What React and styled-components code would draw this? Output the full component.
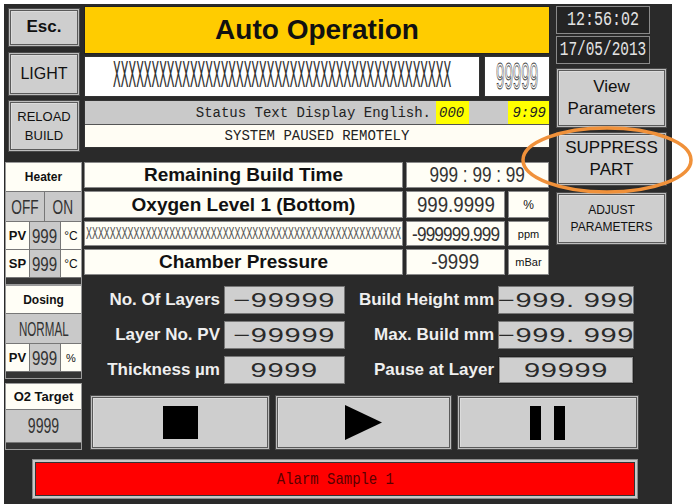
import React from 'react';
import styled, { createGlobalStyle } from 'styled-components';

const Global = createGlobalStyle`
  html, body { margin: 0; padding: 0; background: #fff; }
  body { font-family: "Liberation Sans", Arial, sans-serif; }
  * { box-sizing: border-box; }
`;

const Panel = styled.div`
  position: relative;
  margin: 4px 0 0 4px;
  width: 668px;
  height: 500px;
  background: #2a2a2a;
  padding: 2px 0 0 1px;
  display: flex;
  flex-direction: column;
`;

const Row = styled.div`
  display: flex;
  align-items: flex-start;
`;

const Col = styled.div`
  display: flex;
  flex-direction: column;
  width: ${p => p.$w}px;
  margin-left: ${p => p.$ml || 0}px;
`;

const Btn = styled.div`
  display: flex;
  align-items: center;
  justify-content: center;
  text-align: center;
  height: ${p => p.$h}px;
  margin: ${p => p.$m || '0'};
  background: #cecece;
  border: 1px solid #4a4a4a;
  box-shadow: inset 0 0 0 1px #bdbdbd, inset 0 0 0 2px #5a5a5a, inset 3px 3px 0 #dcdcdc;
  color: #111;
  font-family: "Liberation Sans", Arial, sans-serif;
  font-size: ${p => p.$fs || 16}px;
  font-weight: ${p => (p.$bold ? 700 : 400)};
  line-height: ${p => p.$lh || 1.2};
`;

const Title = styled.div`
  height: 48px;
  background: #ffcc00;
  border: 1px solid #222;
  display: flex;
  align-items: center;
  justify-content: center;
  font-weight: 700;
  font-size: 28px;
  color: #111;
`;

const XRow = styled.div`
  display: flex;
  gap: 4px;
  height: 41px;
  margin-top: 2px;
`;

const WhiteBox = styled.div`
  flex: ${p => (p.$w ? `0 0 ${p.$w}px` : 1)};
  background: #fff;
  border: 1px solid #333;
  display: flex;
  align-items: center;
  justify-content: center;
  overflow: hidden;
`;

const Squeeze = styled.span`
  display: inline-block;
  white-space: nowrap;
  flex: none;
  font-family: ${p => p.$font || '"Liberation Mono", monospace'};
  font-size: ${p => p.$fs}px;
  line-height: 1;
  color: ${p => p.$c || '#333'};
  transform: scale(${p => p.$sx}, ${p => p.$sy || 1});
  transform-origin: ${p => p.$origin || 'center'};
  letter-spacing: ${p => p.$ls || 0}px;
`;

const Outline = styled(Squeeze)`
  color: #fff;
  -webkit-text-stroke: 1px #444;
`;

const StatusBar = styled.div`
  margin-top: 3px;
  border: 1px solid #333;
  display: flex;
  flex-direction: column;
`;

const StatusLine = styled.div`
  height: 23px;
  background: #c9c9c9;
  display: flex;
  align-items: stretch;
  font-family: "Liberation Mono", monospace;
  font-size: 14px;
  color: #222;
`;

const StatusText = styled.div`
  flex: 1;
  display: flex;
  align-items: center;
  justify-content: flex-end;
  padding-right: 5px;
`;

const YellowBox = styled.div`
  width: ${p => p.$w}px;
  margin-right: ${p => p.$mr || 0}px;
  background: #ffff00;
  display: flex;
  align-items: center;
  justify-content: ${p => p.$align || 'flex-start'};
  padding: 0 3px;
  font-style: italic;
`;

const PausedLine = styled.div`
  height: 23px;
  background: #fffdf4;
  border-top: 1px solid #555;
  display: flex;
  align-items: center;
  justify-content: center;
  font-family: "Liberation Mono", monospace;
  font-size: 14px;
  color: #222;
`;

const Table = styled.div`
  margin-top: 14px;
  display: grid;
  grid-template-columns: 319px 99px 41px;
  grid-template-rows: 26px 27px 25px 26px;
  gap: 3px;
`;

const Cell = styled.div`
  background: #fffef6;
  border: 1px solid #8a8a8a;
  display: flex;
  align-items: center;
  justify-content: ${p => (p.$left ? 'flex-start' : 'center')};
  padding-left: ${p => (p.$left ? 1 : 0)}px;
  overflow: hidden;
  grid-column: ${p => p.$span || 'auto'};
  font-weight: ${p => (p.$bold ? 700 : 400)};
  font-size: ${p => p.$fs || 19}px;
  color: #111;
`;

const Clock = styled.div`
  width: 94px;
  height: 28px;
  margin-top: ${p => p.$mt || 0}px;
  border: 1px solid #8a8a8a;
  background: #242424;
  display: flex;
  align-items: center;
  justify-content: center;
  color: #e4e4e4;
`;

const Block = styled.div`
  margin-top: ${p => p.$mt || 0}px;
  border: 1px solid #9a9a9a;
  background: #353535;
  padding-bottom: 6px;
  display: grid;
  grid-template-columns: 24px 15px 16px 20px;
  grid-template-rows: ${p => p.$rows};
`;

const BCell = styled.div`
  grid-column: ${p => p.$span || 'auto'};
  background: ${p => (p.$gray ? '#c9c9c9' : '#fffef6')};
  border-right: ${p => (p.$last ? 'none' : '1px solid #777')};
  border-bottom: 1px solid #777;
  display: flex;
  align-items: center;
  justify-content: center;
  overflow: hidden;
  font-size: ${p => p.$fs || 12}px;
  font-weight: ${p => (p.$bold ? 700 : 400)};
  color: #111;
`;

const Fields = styled.div`
  margin-top: 1px;
  margin-left: 2px;
  display: grid;
  grid-template-columns: 134px 121px 145px 136px;
  grid-auto-rows: 28px;
  column-gap: 4px;
  row-gap: 7px;
`;

const Label = styled.div`
  display: flex;
  align-items: center;
  justify-content: flex-end;
  color: #efefef;
  font-weight: 700;
  font-size: 17px;
  white-space: nowrap;
`;

const ValBox = styled.div`
  background: #cfcfcf;
  border: 1px solid ${p => (p.$dark ? '#222' : '#777')};
  box-shadow: ${p => (p.$dark ? 'inset 0 0 0 1px #888' : 'none')};
  display: flex;
  align-items: center;
  justify-content: center;
  overflow: hidden;
`;

const Controls = styled.div`
  margin-top: 11px;
  margin-left: 6px;
  display: grid;
  grid-template-columns: 180px 177px 182px;
  column-gap: 5px;
`;

const AlarmFrame = styled.div`
  margin: 9px 0 0 27px;
  width: 606px;
  height: 40px;
  border: 1px solid #8a8a8a;
  background: #c8c8c8;
  padding: 2px;
`;

const AlarmInner = styled.div`
  height: 100%;
  background: #ff0000;
  border: 1px solid #333;
  display: flex;
  align-items: center;
  justify-content: center;
`;

const Ring = styled.svg`
  position: absolute;
  left: 517px;
  top: 121px;
  overflow: visible;
`;

const Narrow = ({ children, fs = 22, sx = 0.8, ls = 0, c = '#333' }) => (
  <Squeeze $font='"Liberation Sans", Arial, sans-serif' $fs={fs} $sx={sx} $ls={ls} $c={c}>{children}</Squeeze>
);

const Wide = ({ children }) => (
  <Squeeze $font='"Liberation Sans", Arial, sans-serif' $fs={20} $sx={1.45} $c="#2a2a2a" $ls={0.5}>{children}</Squeeze>
);

export default function App() {
  return (
    <>
      <Global />
      <Panel>
        <Row>
          <Col $w={77}>
            <Btn $h={39} $m="2px 2px 0 3px" $bold $fs={17}>Esc.</Btn>
            <Btn $h={44} $m="5px 2px 0 3px" $fs={16}>LIGHT</Btn>
            <Btn $h={52} $m="4px 2px 0 3px" $fs={13} $lh={1.5}>RELOAD<br />BUILD</Btn>
            <Block $mt={10} $rows="29px 30px 28px 28px">
              <BCell $span="1 / 5" $bold $last>Heater</BCell>
              <BCell $span="1 / 3" $gray><Narrow fs={21} sx={0.65}>OFF</Narrow></BCell>
              <BCell $span="3 / 5" $gray $last><Narrow fs={21} sx={0.65}>ON</Narrow></BCell>
              <BCell $bold $fs={13}>PV</BCell>
              <BCell $span="2 / 4" $gray><Narrow fs={21} sx={0.72}>999</Narrow></BCell>
              <BCell $last>°C</BCell>
              <BCell $bold $fs={13}>SP</BCell>
              <BCell $span="2 / 4" $gray><Narrow fs={21} sx={0.72}>999</Narrow></BCell>
              <BCell $last>°C</BCell>
            </Block>
          </Col>
          <Col $w={466} $ml={2}>
            <Title>Auto Operation</Title>
            <XRow>
              <WhiteBox>
                <Squeeze $fs={40} $sx={0.32} $sy={0.95} $c="#333">{'X'.repeat(44)}</Squeeze>
              </WhiteBox>
              <WhiteBox $w={66}>
                <Outline $font='"Liberation Sans", Arial, sans-serif' $fs={36} $sx={0.42}>99999</Outline>
              </WhiteBox>
            </XRow>
            <StatusBar>
              <StatusLine>
                <StatusText>Status Text Display English.</StatusText>
                <YellowBox $w={33} $mr={39}>000</YellowBox>
                <YellowBox $w={41} $align="flex-end">9:99</YellowBox>
              </StatusLine>
              <PausedLine>SYSTEM PAUSED REMOTELY</PausedLine>
            </StatusBar>
            <Table>
              <Cell $bold>Remaining Build Time</Cell>
              <Cell $span="2 / 4"><Narrow sx={0.78}>999 : 99 : 99</Narrow></Cell>
              <Cell $bold>Oxygen Level 1 (Bottom)</Cell>
              <Cell><Narrow sx={0.85}>999.9999</Narrow></Cell>
              <Cell $fs={12}>%</Cell>
              <Cell $left>
                <Squeeze $fs={18} $sx={0.55} $c="#555" $origin="left center">{'X'.repeat(53)}</Squeeze>
              </Cell>
              <Cell><Narrow fs={20} sx={0.86} ls={-1}>-999999.999</Narrow></Cell>
              <Cell $fs={11}>ppm</Cell>
              <Cell $bold>Chamber Pressure</Cell>
              <Cell><Narrow sx={0.85}>-9999</Narrow></Cell>
              <Cell $fs={11}>mBar</Cell>
            </Table>
          </Col>
          <Col $w={111} $ml={6}>
            <Clock><Squeeze $fs={20} $sx={0.75} $c="#e4e4e4">12:56:02</Squeeze></Clock>
            <Clock $mt={2}><Squeeze $fs={20} $sx={0.72} $c="#e4e4e4">17/05/2013</Squeeze></Clock>
            <Btn $h={60} $m="4px 0 0 0" $fs={17} $lh={1.3}>View<br />Parameters</Btn>
            <Btn $h={54} $m="4px 0 0 0" $fs={17} $lh={1.3}>SUPPRESS<br />PART</Btn>
            <Btn $h={53} $m="6px 0 0 0" $fs={12} $lh={1.35}>ADJUST<br />PARAMETERS</Btn>
          </Col>
        </Row>
        <Row>
          <Col $w={77}>
            <Block $rows="28px 30px 28px">
              <BCell $span="1 / 5" $bold $last>Dosing</BCell>
              <BCell $span="1 / 5" $gray $last><Narrow fs={20} sx={0.58}>NORMAL</Narrow></BCell>
              <BCell $bold $fs={13}>PV</BCell>
              <BCell $span="2 / 4" $gray><Narrow fs={21} sx={0.72}>999</Narrow></BCell>
              <BCell $last $fs={11}>%</BCell>
            </Block>
            <Block $mt={4} $rows="26px 33px">
              <BCell $span="1 / 5" $bold $last $fs={13}>O2 Target</BCell>
              <BCell $span="1 / 5" $gray $last><Narrow fs={22} sx={0.64}>9999</Narrow></BCell>
            </Block>
          </Col>
          <Col $w={580} $ml={2}>
            <Fields>
              <Label>No. Of Layers</Label>
              <ValBox><Wide>−99999</Wide></ValBox>
              <Label>Build Height mm</Label>
              <ValBox><Wide>−999. 999</Wide></ValBox>
              <Label>Layer No. PV</Label>
              <ValBox><Wide>−99999</Wide></ValBox>
              <Label>Max. Build mm</Label>
              <ValBox><Wide>−999. 999</Wide></ValBox>
              <Label>Thickness µm</Label>
              <ValBox><Wide>9999</Wide></ValBox>
              <Label>Pause at Layer</Label>
              <ValBox $dark><Wide>99999</Wide></ValBox>
            </Fields>
            <Controls>
              <Btn $h={55}>
                <svg width="35" height="33" viewBox="0 0 35 33"><rect width="35" height="33" fill="#000" /></svg>
              </Btn>
              <Btn $h={55}>
                <svg width="37" height="35" viewBox="0 0 37 35"><polygon points="0,0 37,17.5 0,35" fill="#000" /></svg>
              </Btn>
              <Btn $h={55}>
                <svg width="36" height="34" viewBox="0 0 36 34"><rect x="0" width="11" height="34" fill="#000" /><rect x="24" width="11" height="34" fill="#000" /></svg>
              </Btn>
            </Controls>
          </Col>
        </Row>
        <AlarmFrame>
          <AlarmInner>
            <Squeeze $fs={17} $sx={0.82} $c="#5a0000">Alarm Sample 1</Squeeze>
          </AlarmInner>
        </AlarmFrame>
        <Ring width="170" height="68" viewBox="0 0 170 68">
          <ellipse cx="86" cy="35" rx="84" ry="32" fill="none" stroke="#f0913a" strokeWidth="3.5" />
        </Ring>
      </Panel>
    </>
  );
}
